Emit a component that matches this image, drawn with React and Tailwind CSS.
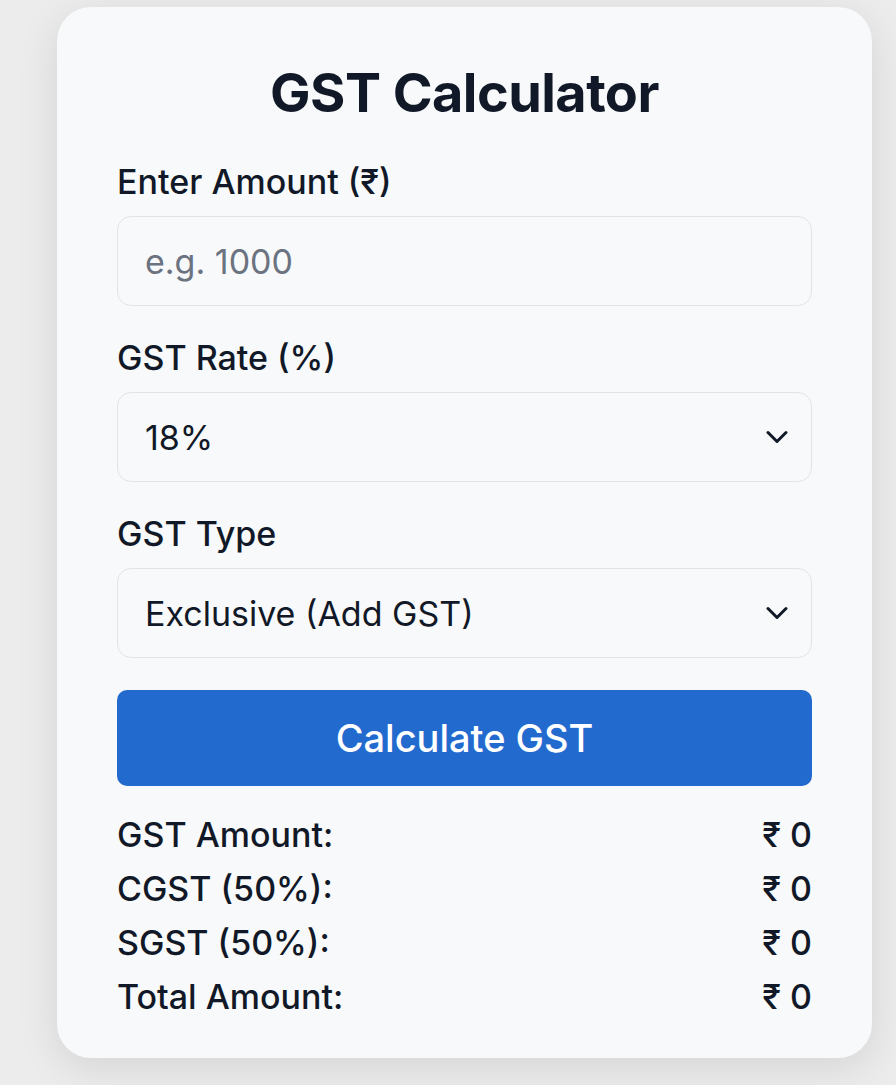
import { useState } from 'react'

function Chevron() {
  return (
    <svg
      className="pointer-events-none absolute right-[24px] top-1/2 -translate-y-1/2"
      width="22"
      height="14"
      viewBox="0 0 22 14"
      fill="none"
    >
      <path d="M2 2.5l9 9 9-9" stroke="#111827" strokeWidth="3" strokeLinecap="round" strokeLinejoin="round" />
    </svg>
  )
}

function Field({ label, children }) {
  return (
    <div className="mb-[32px]">
      <label className="block text-[34px] leading-[40px] font-medium text-[#111827] mb-[14px]">{label}</label>
      {children}
    </div>
  )
}

export default function App() {
  const [amount, setAmount] = useState('')
  const [rate, setRate] = useState('18')
  const [type, setType] = useState('exclusive')
  const [result, setResult] = useState({ gst: 0, cgst: 0, sgst: 0, total: 0 })

  const calculate = () => {
    const a = parseFloat(amount) || 0
    const r = parseFloat(rate) / 100
    let gst = 0
    let total = 0
    if (type === 'exclusive') {
      gst = a * r
      total = a + gst
    } else {
      gst = a - a / (1 + r)
      total = a
    }
    const round = (n) => Math.round(n * 100) / 100
    setResult({ gst: round(gst), cgst: round(gst / 2), sgst: round(gst / 2), total: round(total) })
  }

  const rows = [
    ['GST Amount:', result.gst],
    ['CGST (50%):', result.cgst],
    ['SGST (50%):', result.sgst],
    ['Total Amount:', result.total],
  ]

  return (
    <div className="min-h-screen bg-[#ececec] pt-[7px] pb-[25px] font-['Inter','Noto_Sans',sans-serif] text-[#111827]">
      <div className="ml-[57px] w-[815px] rounded-[34px] bg-[#f8f9fa] px-[60px] pt-[53px] pb-[34px] shadow-[0_10px_40px_rgba(0,0,0,0.1)]">
        <h1 className="text-center text-[54px] leading-[66px] font-bold tracking-[-0.01em] mb-[36px]">GST Calculator</h1>

        <Field label="Enter Amount (₹)">
          <input
            type="number"
            value={amount}
            onChange={(e) => setAmount(e.target.value)}
            placeholder="e.g. 1000"
            className="block w-full h-[90px] rounded-[14px] border border-[#e2e4e7] bg-[#f8f9fa] pl-[27px] pr-[24px] text-[34px] text-[#111827] placeholder:text-[#6b7280] outline-none"
          />
        </Field>

        <Field label="GST Rate (%)">
          <div className="relative">
            <select
              value={rate}
              onChange={(e) => setRate(e.target.value)}
              className="block w-full h-[90px] appearance-none rounded-[14px] border border-[#e2e4e7] bg-[#f8f9fa] pl-[27px] pr-[60px] text-[34px] text-[#111827] outline-none"
            >
              <option value="5">5%</option>
              <option value="12">12%</option>
              <option value="18">18%</option>
              <option value="28">28%</option>
            </select>
            <Chevron />
          </div>
        </Field>

        <Field label="GST Type">
          <div className="relative">
            <select
              value={type}
              onChange={(e) => setType(e.target.value)}
              className="block w-full h-[90px] appearance-none rounded-[14px] border border-[#e2e4e7] bg-[#f8f9fa] pl-[27px] pr-[60px] text-[34px] text-[#111827] outline-none"
            >
              <option value="exclusive">Exclusive (Add GST)</option>
              <option value="inclusive">Inclusive (Remove GST)</option>
            </select>
            <Chevron />
          </div>
        </Field>

        <button
          type="button"
          onClick={calculate}
          className="mt-[1px] block w-full h-[96px] rounded-[10px] bg-[#236acf] text-[38px] font-medium text-white"
        >
          Calculate GST
        </button>

        <div className="mt-[22px]">
          {rows.map(([label, value]) => (
            <div key={label} className="flex justify-between text-[34px] leading-[54px] font-medium">
              <span>{label}</span>
              <span>₹ {value}</span>
            </div>
          ))}
        </div>
      </div>
    </div>
  )
}
